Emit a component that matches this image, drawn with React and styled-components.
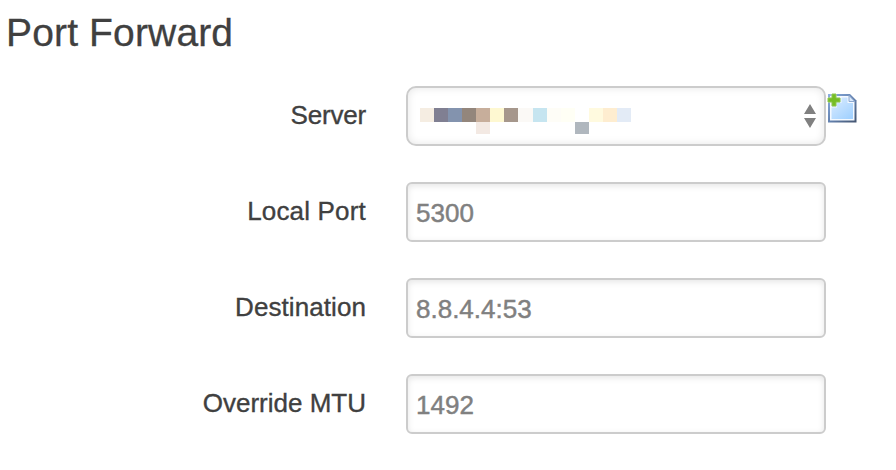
import React from "react";
import styled, { createGlobalStyle } from "styled-components";

const GlobalStyle = createGlobalStyle`
  * { box-sizing: border-box; }
  body {
    margin: 0;
    background: #fff;
    color: #404040;
    font-family: "Liberation Sans", Arial, sans-serif;
  }
`;

const Page = styled.main`
  width: 896px;
  height: 470px;
  overflow: hidden;
`;

const Title = styled.h1`
  margin: 0;
  padding: 9px 0 0 6px;
  height: 86px;
  font-size: 39px;
  line-height: 48px;
  font-weight: 400;
  letter-spacing: 0.15px;
  white-space: nowrap;
  -webkit-text-stroke: 0.3px currentColor;
`;

const Form = styled.form`
  display: grid;
  gap: 36px;
`;

const Row = styled.div`
  display: grid;
  grid-template-columns: 366px 420px auto;
  column-gap: 40px;
  height: 60px;
`;

const Label = styled.label`
  font-size: 26px;
  line-height: 36px;
  padding-top: 11px;
  text-align: right;
  white-space: nowrap;
  letter-spacing: ${(p) => p.$tracking || "0"};
  -webkit-text-stroke: 0.35px currentColor;
`;

const Input = styled.input`
  width: 420px;
  height: 60px;
  margin: 0;
  padding: 2px 8px 0;
  border: 2px solid #ccc;
  border-radius: 6px;
  outline: none;
  background: #fff;
  box-shadow: inset 0 2px 6px rgba(0, 0, 0, 0.1);
  color: #808080;
  font: 26px "Liberation Sans", Arial, sans-serif;
  -webkit-text-stroke: 0.45px currentColor;
`;

const Select = styled.div`
  display: flex;
  align-items: flex-start;
  justify-content: space-between;
  height: 60px;
  padding: 20px 8px 0 12px;
  border: 2px solid #ccc;
  border-radius: 10px;
  background: #fff;
  box-shadow: inset 0 0 8px rgba(0, 0, 0, 0.1);
`;

const Mosaic = styled.div`
  display: grid;
  grid-template-columns: repeat(15, 14.07px);
  grid-template-rows: 14px 12px;
`;

const Cell = styled.span`
  grid-column: ${(p) => p.$col};
  grid-row: ${(p) => p.$row};
  background: ${(p) => p.$color};
`;

const Arrows = styled.svg`
  display: block;
  width: 12px;
  height: 24px;
  margin-top: -4px;
`;

const AddIcon = styled.svg`
  display: block;
  width: 32px;
  height: 32px;
  margin: 6px 0 0 -40px;
`;

const topCells = [
  "#f5ede2", "#807f92", "#8393ae", "#93867c", "#c7ae9b",
  "#fef8d1", "#a6978c", "#fbf9f6", "#c6e5f0", "#fefdf7",
  "#fffff5", "#ffffff", "#fffadf", "#feedd0", "#e3ebf6",
];

const fields = [
  { id: "local-port", label: "Local Port", value: "5300", tracking: "0.18px" },
  { id: "destination", label: "Destination", value: "8.8.4.4:53", tracking: "0.08px" },
  { id: "mtu", label: "Override MTU", value: "1492" },
];

function AddDocument() {
  return (
    <AddIcon viewBox="0 0 32 32" role="img" aria-label="Add server">
      <defs>
        <linearGradient id="edge" x1="0" y1="0" x2="1" y2="1">
          <stop offset="0" stopColor="#8cb0e2" />
          <stop offset="0.5" stopColor="#6482b0" />
          <stop offset="1" stopColor="#43546f" />
        </linearGradient>
        <linearGradient id="paper" x1="0" y1="0" x2="0.8" y2="1">
          <stop offset="0" stopColor="#dcecff" />
          <stop offset="1" stopColor="#a3d2ff" />
        </linearGradient>
      </defs>
      <path d="M2 2H24L30.5 8.5V30.5H2Z" fill="url(#edge)" />
      <path d="M4 4H23L28.5 9.5V28.5H4Z" fill="#f4f9ff" />
      <path d="M5.5 5.5H21.5V11H27V27H5.5Z" fill="url(#paper)" />
      <path d="M23 3.5L28.8 9.5H23Z" fill="#dbe9fa" stroke="#8ca8d0" strokeWidth="1" />
      <path d="M4.5 0H11V5H16V11H11V16H4.5V11H0V5H4.5Z" fill="#fff" opacity="0.4" />
      <path d="M6 2H10V6H14V10H10V14H6V10H2V6H6Z" fill="#76bd25" stroke="#8cc64c" strokeWidth="1" />
    </AddIcon>
  );
}

export default function App() {
  return (
    <Page>
      <GlobalStyle />
      <Title>Port Forward</Title>
      <Form>
        <Row>
          <Label $tracking="-0.2px">Server</Label>
          <Select>
            <Mosaic>
              {topCells.map((color, i) => (
                <Cell key={i} $col={i + 1} $row={1} $color={color} />
              ))}
              <Cell $col={5} $row={2} $color="#f3e9e3" />
              <Cell $col={12} $row={2} $color="#b0b7be" />
            </Mosaic>
            <Arrows viewBox="0 0 12 24">
              <path d="M6 0L12 10H0ZM0 14H12L6 24Z" fill="#808080" />
            </Arrows>
          </Select>
          <AddDocument />
        </Row>
        {fields.map((f) => (
          <Row key={f.id}>
            <Label htmlFor={f.id} $tracking={f.tracking}>{f.label}</Label>
            <Input id={f.id} defaultValue={f.value} />
          </Row>
        ))}
      </Form>
    </Page>
  );
}
